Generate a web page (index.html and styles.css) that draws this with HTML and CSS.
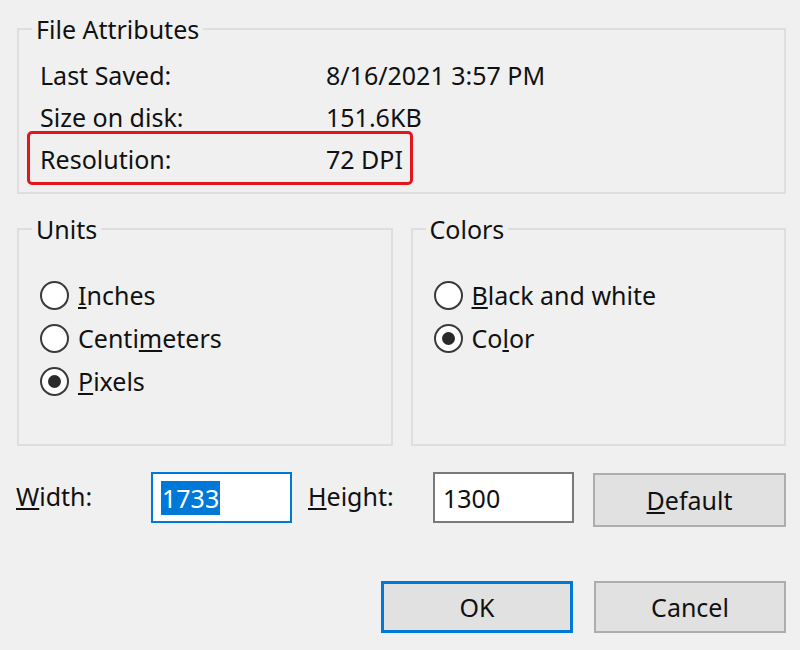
FILE: index.html
```html
<!DOCTYPE html>
<html lang="en">
<head>
  <meta charset="UTF-8" />
  <title>Attributes</title>
  <link rel="stylesheet" href="styles.css">
</head>
<body>
  <div class="dialog">
    <fieldset class="group attrs">
      <legend>File Attributes</legend>
      <div class="attr-row">
        <span>Last Saved:</span>
        <span>8/16/2021 3:57 PM</span>
      </div>
      <div class="attr-row">
        <span>Size on disk:</span>
        <span>151.6KB</span>
      </div>
      <div class="attr-row marked">
        <span>Resolution:</span>
        <span>72 DPI</span>
      </div>
    </fieldset>

    <div class="group-pair">
      <fieldset class="group options">
        <legend>Units</legend>
        <label class="radio"><span class="dot"></span><span><u>I</u>nches</span></label>
        <label class="radio"><span class="dot"></span><span>Centi<u>m</u>eters</span></label>
        <label class="radio"><span class="dot checked"></span><span><u>P</u>ixels</span></label>
      </fieldset>
      <fieldset class="group options">
        <legend>Colors</legend>
        <label class="radio"><span class="dot"></span><span><u>B</u>lack and white</span></label>
        <label class="radio"><span class="dot checked"></span><span>Co<u>l</u>or</span></label>
      </fieldset>
    </div>

    <div class="size-row">
      <span class="size-label"><u>W</u>idth:</span>
      <div class="field focused"><span class="selected">1733</span></div>
      <span class="size-label height"><u>H</u>eight:</span>
      <div class="field">1300</div>
      <button class="btn"><u>D</u>efault</button>
    </div>

    <div class="actions">
      <button class="btn primary">OK</button>
      <button class="btn">Cancel</button>
    </div>
  </div>
</body>
</html>
```

FILE: styles.css
```css
body {
  margin: 0;
  background: #f0f0f0;
  color: #111;
  font-family: "Noto Sans", "Open Sans", sans-serif;
  font-size: 25px;
}

.dialog {
  padding: 14px 14px 0 17px;
}

.group {
  margin: 0;
  border: 2px solid #dedede;
  padding: 0 0 0 21px;
}

.group legend {
  margin-left: -8px;
  padding: 0 4px;
  line-height: 30px;
}

/* file attributes */
.attrs {
  padding-top: 10px;
  padding-bottom: 7px;
}

.attr-row {
  display: grid;
  grid-template-columns: 286px auto;
  line-height: 42px;
}

.attr-row.marked {
  width: 370px;
  margin: -7px 0 0 -13px;
  padding: 4px 0 2px 10px;
  border: 3px solid #e3171b;
  border-radius: 5px;
}

/* units / colors */
.group-pair {
  display: flex;
  gap: 18px;
  margin-top: 20px;
}

.options {
  flex: 1;
  padding-top: 30px;
  padding-bottom: 41px;
}

.radio {
  display: flex;
  align-items: center;
  gap: 9px;
  line-height: 43px;
}

.dot {
  box-sizing: border-box;
  width: 29px;
  height: 29px;
  border: 2px solid #3a3a3a;
  border-radius: 50%;
  background: #fff;
  display: flex;
  align-items: center;
  justify-content: center;
}

.dot.checked::after {
  content: "";
  width: 13px;
  height: 13px;
  border-radius: 50%;
  background: #2a2a2a;
}

/* width / height */
.size-row {
  display: flex;
  align-items: flex-start;
  margin-top: 26px;
  margin-left: -1px;
}

.size-label {
  width: 135px;
  line-height: 48px;
}

.size-label.height {
  width: 125px;
  margin-left: 16px;
}

.field {
  box-sizing: border-box;
  width: 141px;
  height: 51px;
  border: 2px solid #7a7a7a;
  background: #fff;
  padding: 0 8px;
  display: flex;
  align-items: center;
}

.field.focused {
  border-color: #0078d7;
}

.selected {
  background: #0078d7;
  color: #fff;
  padding: 0 1px;
}

.btn {
  box-sizing: border-box;
  width: 193px;
  height: 54px;
  margin: 1px 0 0 19px;
  border: 2px solid #adadad;
  background: #e1e1e1;
  font: inherit;
  color: #111;
}

.btn.primary {
  border: 3px solid #0078d7;
}

.actions {
  display: flex;
  justify-content: flex-end;
  gap: 21px;
  margin: 54px 0 0 0;
}

.actions .btn {
  width: 192px;
  height: 52px;
  margin: 0;
}
```
